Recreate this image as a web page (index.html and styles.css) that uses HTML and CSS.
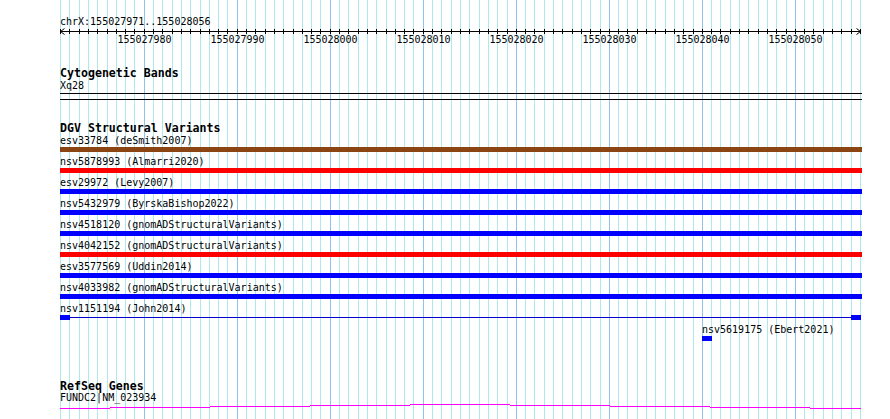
FILE: index.html
```html
<!DOCTYPE html>
<html lang="en">
<head>
    <meta charset="UTF-8">
    <meta name="viewport" content="width=device-width, initial-scale=1.0">
    <title>Genome Browser - chrX:155027971-155028056</title>
    <link rel="stylesheet" href="styles.css">
</head>
<body>
    <div class="browser">
        <!-- base position guide lines, filled in by script.js -->
        <svg class="guides" id="guides" width="890" height="419"></svg>

        <div class="position">chrX:155027971..155028056</div>
        <svg class="ruler" id="ruler" width="890" height="18">
            <rect x="60" y="3" width="801" height="1"></rect>
            <path class="arrow" d="M64.5 0.5 L60.5 3.5 L64.5 6.5 M856.5 0.5 L860.5 3.5 L856.5 6.5"></path>
        </svg>

        <div class="track cyto">
            <div class="track-title">Cytogenetic Bands</div>
            <div class="feat-label">Xq28</div>
            <div class="band"></div>
        </div>

        <div class="track dgv">
            <div class="track-title">DGV Structural Variants</div>
            <div class="feat">
                <div class="feat-label">esv33784 (deSmith2007)</div>
                <div class="bar brown"></div>
            </div>
            <div class="feat">
                <div class="feat-label">nsv5878993 (Almarri2020)</div>
                <div class="bar red"></div>
            </div>
            <div class="feat">
                <div class="feat-label">esv29972 (Levy2007)</div>
                <div class="bar blue"></div>
            </div>
            <div class="feat">
                <div class="feat-label">nsv5432979 (ByrskaBishop2022)</div>
                <div class="bar blue"></div>
            </div>
            <div class="feat">
                <div class="feat-label">nsv4518120 (gnomADStructuralVariants)</div>
                <div class="bar blue"></div>
            </div>
            <div class="feat">
                <div class="feat-label">nsv4042152 (gnomADStructuralVariants)</div>
                <div class="bar red"></div>
            </div>
            <div class="feat">
                <div class="feat-label">esv3577569 (Uddin2014)</div>
                <div class="bar blue"></div>
            </div>
            <div class="feat">
                <div class="feat-label">nsv4033982 (gnomADStructuralVariants)</div>
                <div class="bar blue"></div>
            </div>
            <div class="feat">
                <div class="feat-label">nsv1151194 (John2014)</div>
                <div class="split">
                    <div class="block"></div>
                    <div class="intron"></div>
                    <div class="block"></div>
                </div>
            </div>
            <div class="feat shifted">
                <div class="feat-label">nsv5619175 (Ebert2021)</div>
                <div class="split">
                    <div class="block"></div>
                </div>
            </div>
        </div>

        <div class="track refseq">
            <div class="track-title">RefSeq Genes</div>
            <div class="feat-label">FUNDC2|NM_023934</div>
            <svg class="gene-line" width="802" height="5">
                <rect x="0" y="4" width="50" height="1"></rect>
                <rect x="50" y="3" width="100" height="1"></rect>
                <rect x="150" y="2" width="100" height="1"></rect>
                <rect x="250" y="1" width="100" height="1"></rect>
                <rect x="350" y="0" width="100" height="1"></rect>
                <rect x="450" y="1" width="100" height="1"></rect>
                <rect x="550" y="2" width="100" height="1"></rect>
                <rect x="650" y="3" width="100" height="1"></rect>
                <rect x="750" y="4" width="51" height="1"></rect>
            </svg>
        </div>
    </div>

    <script src="script.js"></script>
</body>
</html>
```

FILE: styles.css
```css
body {
    margin: 0;
    background-color: #fff;
    color: #000;
    font-family: "DejaVu Sans Mono", "Liberation Mono", monospace;
    font-size: 10px;
}
.browser {
    position: relative;
    width: 890px;
    height: 419px;
    overflow: hidden;
}
.guides {
    position: absolute;
    top: 0;
    left: 0;
    z-index: -1;
}
.guides .minor {
    fill: #aee8ef;
}
.guides .major {
    fill: #8ec3ee;
}
.position {
    padding: 16px 0 0 60px;
    height: 12px;
    line-height: 12px;
}
.ruler {
    display: block;
}
.ruler rect {
    fill: #000;
}
.ruler .arrow {
    fill: none;
    stroke: #000;
    stroke-width: 1;
}
.ruler text {
    font-family: "DejaVu Sans Mono", "Liberation Mono", monospace;
    font-size: 10px;
    text-anchor: middle;
    fill: #000;
}
.track {
    padding-left: 60px;
}
.track-title {
    font-weight: bold;
    font-size: 11.6px;
    height: 14px;
    line-height: 14px;
    white-space: nowrap;
}
.feat-label {
    height: 12px;
    line-height: 12px;
    white-space: nowrap;
}
.cyto {
    margin-top: 20px;
}
.band {
    width: 802px;
    height: 5px;
    margin-top: 1px;
    border-top: 1px solid #000;
    border-bottom: 1px solid #000;
}
.dgv {
    margin-top: 21px;
}
.feat {
    margin-bottom: 4px;
}
.bar {
    width: 802px;
    height: 5px;
}
.brown {
    background-color: #8b4513;
}
.red {
    background-color: #ff0000;
}
.blue {
    background-color: #0000ff;
}
.split {
    display: flex;
    align-items: center;
    width: 801px;
    height: 5px;
}
.block {
    width: 10px;
    height: 5px;
    background-color: #0000ff;
}
.intron {
    flex: 1;
    height: 1px;
    background-color: #0000cc;
}
.shifted {
    padding-left: 642px;
}
.refseq {
    margin-top: 39px;
}
.refseq .track-title {
    height: 12px;
    line-height: 12px;
}
.gene-line {
    display: block;
}
.gene-line rect {
    fill: #ff00ff;
}
```

FILE: script.js
```js
const svgNS = "http://www.w3.org/2000/svg";
const chromStart = 155027971;
const baseCount = 86;
const left = 60;
const span = 800;

// x position of the left edge of a base
function baseX(i) {
    return Math.round(left + i * span / baseCount);
}

function addRect(parent, x, y, w, h, cls) {
    const r = document.createElementNS(svgNS, "rect");
    r.setAttribute("x", x);
    r.setAttribute("y", y);
    r.setAttribute("width", w);
    r.setAttribute("height", h);
    if (cls) r.setAttribute("class", cls);
    parent.appendChild(r);
}

const guides = document.getElementById("guides");
const ruler = document.getElementById("ruler");

for (let i = 0; i <= baseCount; i++) {
    const x = baseX(i);
    const major = (chromStart + i) % 10 === 0;
    addRect(guides, x, 0, 1, 419, major ? "major" : "minor");
    addRect(ruler, x, 1, 1, 5);

    if (major) {
        const t = document.createElementNS(svgNS, "text");
        t.setAttribute("x", x + 0.5);
        t.setAttribute("y", 15);
        t.textContent = chromStart + i;
        ruler.appendChild(t);
    }
}
```
